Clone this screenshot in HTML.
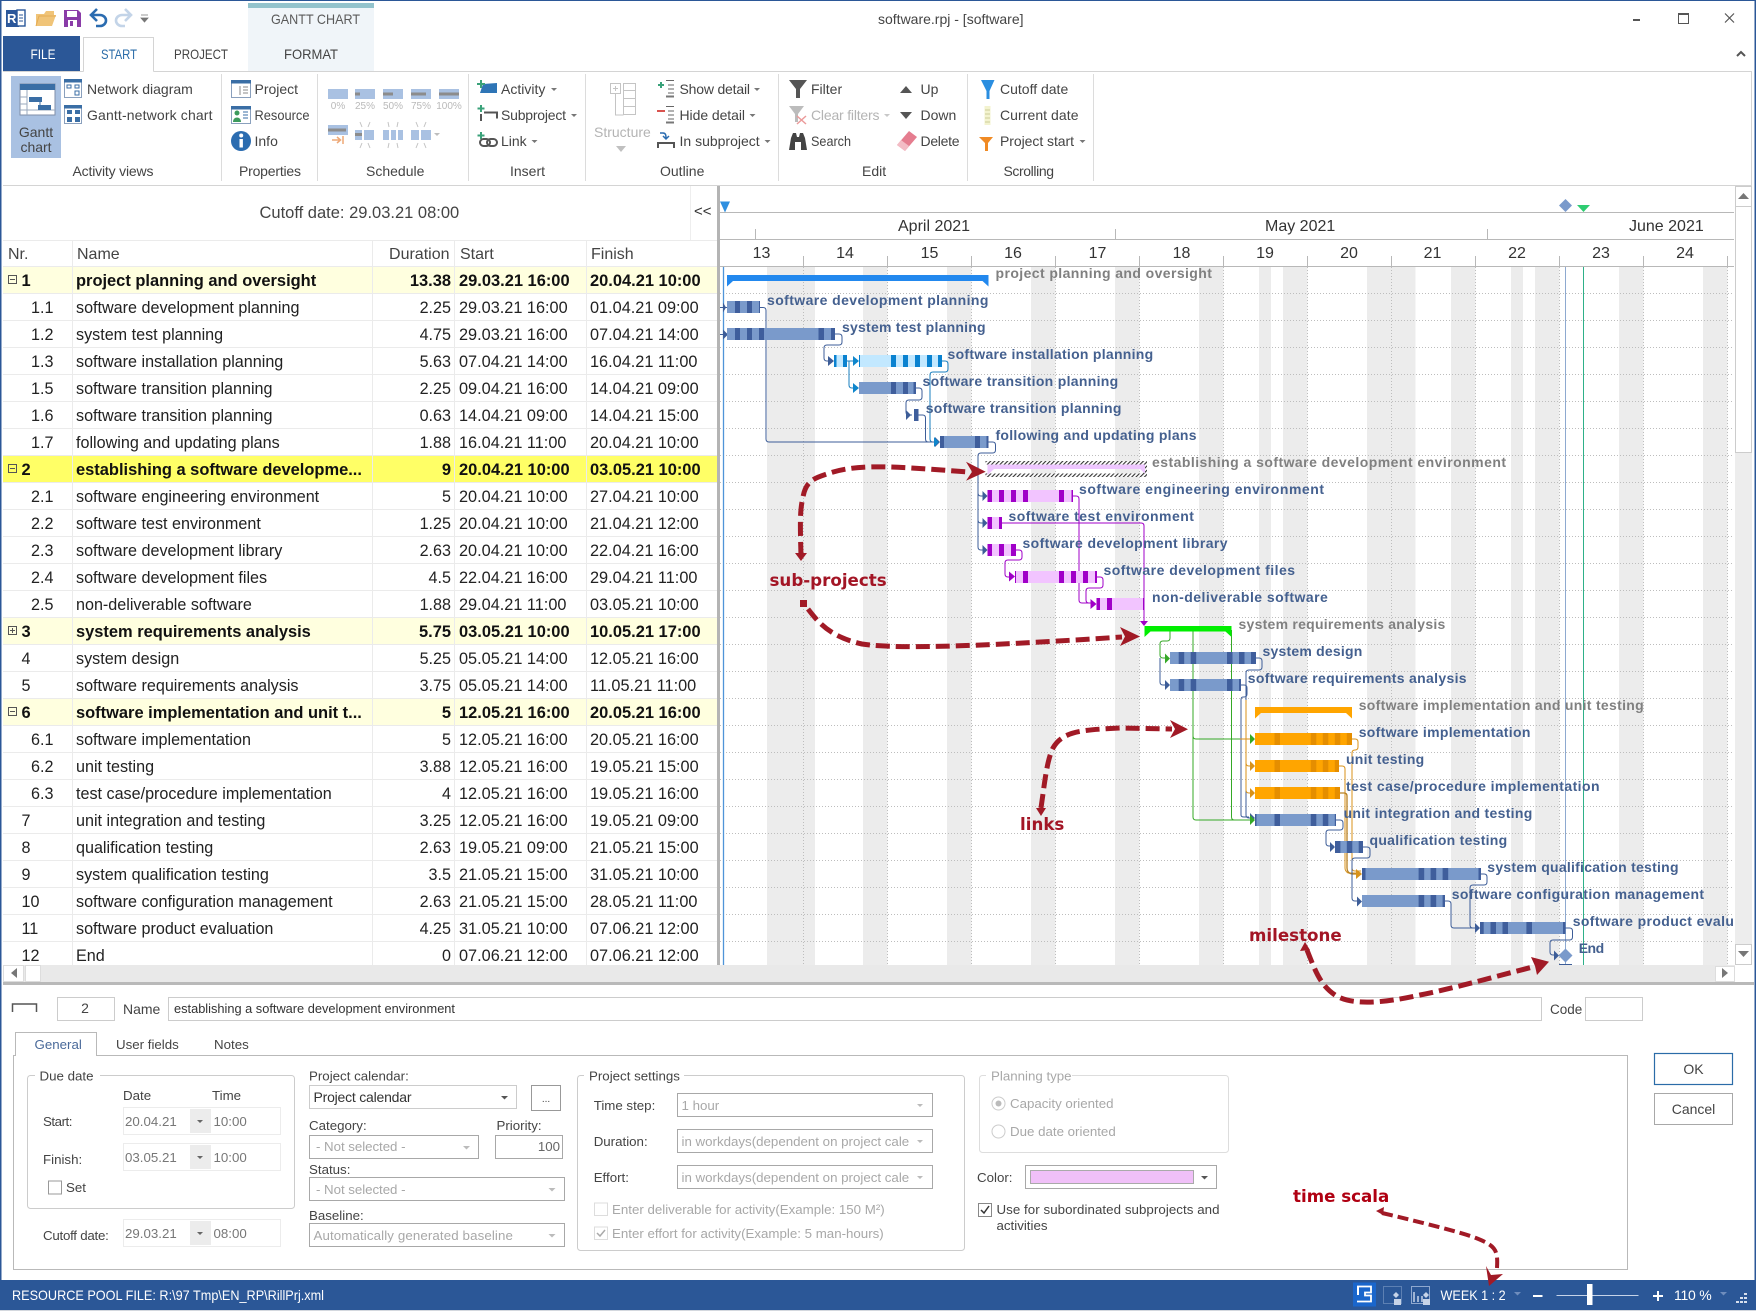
<!DOCTYPE html>
<html lang="en"><head><meta charset="utf-8"><title>software.rpj - [software]</title>
<style>
html,body{margin:0;padding:0;background:#fff;width:1756px;height:1311px;overflow:hidden}
svg{display:block}
text{font-family:"Liberation Sans",Arial,sans-serif}
.r{font-size:14px;fill:#444}
.rg{font-size:14px;fill:#b4b4b4}
.p{font-size:10px;fill:#b9b9b9}
.t{font-size:16.15px;fill:#222}
text.t[x="459"],text.t[x="590"]{font-size:16.3px}
.tb{font-size:16.45px;fill:#111;font-weight:bold}
.h{font-size:16px;fill:#444}
.e{text-anchor:end}
.m{text-anchor:middle}
.l{font-size:14px;font-weight:bold;fill:#44608f}
.s{font-size:14px;font-weight:bold;fill:#808080}
.a{font-family:"DejaVu Sans",sans-serif;font-size:16.7px;font-weight:bold;fill:#a31525}
.d{font-size:13.3px;fill:#444}
.dg{font-size:13.3px;fill:#a8a8a8}
.w{font-size:14px;fill:#fff}
.c{fill:none;stroke-width:1}
.cb{stroke:#3d5d98}.cl{stroke:#1a7fbf}.cp{stroke:#a000c8}.cg{stroke:#35a826}.co{stroke:#d8921a}
.dash{fill:none;stroke:#a11a26;stroke-width:5;stroke-dasharray:14 6}
</style></head><body>
<svg xmlns="http://www.w3.org/2000/svg" width="1756" height="1311" viewBox="0 0 1756 1311">
<defs>
<pattern id="hatch" width="3" height="3" patternUnits="userSpaceOnUse" patternTransform="rotate(45)"><rect width="3" height="3" fill="#fff"/><rect width="1.1" height="3" fill="#333"/></pattern>
<clipPath id="gc"><rect x="720" y="186" width="1014" height="779"/></clipPath>
</defs>
<rect width="1756" height="1311" fill="#fff"/>

<!-- window frame -->
<rect x="0" y="0" width="1756" height="1" fill="#2b5797"/>
<rect x="0" y="0" width="1.5" height="1311" fill="#2b5797"/>
<rect x="1754.5" y="0" width="1.5" height="1311" fill="#2b5797"/>

<!-- quick access -->
<rect x="6" y="10" width="13" height="17" fill="#2b579a"/><text x="7" y="23" style="font-size:13px;font-weight:bold;fill:#fff">R</text>
<rect x="17" y="10" width="8" height="16" fill="#fff" stroke="#2b579a" stroke-width="1.4"/><path d="M19 15h4M19 18h4M19 21h4" stroke="#2b579a"/>
<path d="M36 14h8l2-3h8v4h2l-4 11H36z" fill="#f0c478"/><path d="M36 26l3-10h17" fill="none" stroke="#e5ac55"/>
<path d="M64 10h14l3 3v14H64z" fill="#8a3ca8"/><rect x="67" y="11" width="10" height="6" fill="#fff"/><rect x="68" y="20" width="9" height="7" fill="#fff"/><rect x="70" y="21" width="3" height="5" fill="#8a3ca8"/>
<path d="M92 15h8a6 5.500 0 0 1 0 11h-4M97 9l-6 6 6 6" fill="none" stroke="#2b6cb0" stroke-width="2.6"/>
<path d="M130 15h-8a6 5.500 0 0 0 0 11h3M125 9l6 6-6 6" fill="none" stroke="#c3d4e8" stroke-width="2.6"/>
<path d="M141 15h7M141 18h7l-3.500 4z" fill="#777" stroke="#777" stroke-width=".8"/>

<!-- title bar -->
<rect x="248" y="3" width="126" height="68" fill="#f0f5f9"/><rect x="248" y="3" width="126" height="5" fill="#93c3cc"/>
<text x="271" y="24" class="r" style="fill:#5a5a5a" textLength="89" lengthAdjust="spacingAndGlyphs">GANTT CHART</text>
<text x="878" y="24" class="r" style="fill:#444">software.rpj - [software]</text>
<rect x="1633" y="19" width="7" height="2" fill="#555"/>
<rect x="1678.500" y="13.500" width="10" height="10" fill="none" stroke="#555"/><rect x="1678" y="13" width="11" height="2" fill="#555"/>
<path d="M1725 13.500l9 9M1734 13.500l-9 9" stroke="#555" stroke-width="1.2"/>
<path d="M1737 56l4-4 4 4" fill="none" stroke="#555" stroke-width="2"/>

<!-- tabs -->
<rect x="3" y="36" width="77" height="35" fill="#2b5797"/>
<text x="30.500" y="59" class="w" textLength="25" lengthAdjust="spacingAndGlyphs">FILE</text>
<path d="M83.500 71.500V37.500H153.500V71.500" fill="#fff" stroke="#d4d4d4"/>
<text x="101" y="59" class="r" style="fill:#2b6ca8" textLength="36" lengthAdjust="spacingAndGlyphs">START</text>
<text x="174" y="59" class="r" textLength="54" lengthAdjust="spacingAndGlyphs">PROJECT</text>
<text x="284" y="59" class="r" textLength="54" lengthAdjust="spacingAndGlyphs">FORMAT</text>

<!-- ribbon lines -->
<path d="M3 71.500H83.500M153.500 71.500H1751.500V185.500H3" fill="none" stroke="#d4d4d4"/>
<path d="M221.500 74V181M317.500 74V181M468.500 74V181M585.500 74V181M778.500 74V181M967.500 74V181M1093.500 74V181" stroke="#dcdcdc"/>

<!-- activity views -->
<rect x="11" y="76" width="50" height="82" fill="#a9c1e2"/>
<rect x="20" y="84" width="35" height="31" fill="#fff" stroke="#7f8ea8"/>
<rect x="20" y="84" width="35" height="6" fill="#3a6ea5"/>
<path d="M27 90v25M20 97h7M20 104h7M20 110h35" stroke="#9aa8bd"/>
<rect x="29" y="97" width="13" height="5" fill="#3a6ea5"/><rect x="38" y="105" width="13" height="5" fill="#3a6ea5"/>
<path d="M40 102v3" stroke="#3a6ea5"/>
<text x="36" y="137" class="r m">Gantt</text><text x="36" y="152" class="r m">chart</text>
<rect x="64.500" y="79.500" width="17" height="18" fill="#fff" stroke="#8aa0bd"/><rect x="64" y="79" width="18" height="3.500" fill="#3a6ea5"/>
<rect x="67" y="85" width="4" height="3" fill="none" stroke="#3a6ea5"/><rect x="75" y="85" width="4" height="3" fill="none" stroke="#3a6ea5"/><rect x="75" y="91" width="4" height="4" fill="none" stroke="#3a6ea5"/>
<rect x="64.500" y="105.500" width="17" height="18" fill="#fff" stroke="#8aa0bd"/><rect x="64" y="105" width="18" height="3.500" fill="#3a6ea5"/>
<rect x="67" y="110" width="5" height="4" fill="#3a6ea5"/><rect x="75" y="110" width="5" height="4" fill="#3a6ea5"/><rect x="67" y="117" width="5" height="5" fill="#3a6ea5"/><rect x="75" y="117" width="5" height="5" fill="#3a6ea5"/>
<text x="87" y="94" class="r">Network diagram</text>
<text x="87" y="120" class="r" textLength="125.500" lengthAdjust="spacing">Gantt-network chart</text>
<text x="72.500" y="176" class="r" textLength="81" lengthAdjust="spacing">Activity views</text>

<!-- properties -->
<rect x="231.500" y="80.500" width="19" height="17" fill="#fff" stroke="#8aa0bd"/><rect x="231" y="80" width="20" height="3.500" fill="#3a6ea5"/><path d="M240 86v9M243 87h5M243 90h5M243 93h5" stroke="#8a8a8a"/>
<rect x="231.500" y="106.500" width="19" height="17" fill="#fff" stroke="#8aa0bd"/><rect x="231" y="106" width="20" height="3.500" fill="#3a6ea5"/><circle cx="237" cy="113" r="2.500" fill="#3c9a5c"/><path d="M233 122c0-6 8-6 8 0z" fill="#3c9a5c"/><path d="M243 112h5M243 115h5M243 118h5" stroke="#3a6ea5"/>
<circle cx="241" cy="141" r="10" fill="#2b6cb0"/><rect x="239.500" y="139" width="3.400" height="8.500" fill="#fff"/><circle cx="241.200" cy="135.500" r="2" fill="#fff"/>
<text x="254.500" y="94" class="r">Project</text>
<text x="254.500" y="120" class="r" textLength="55" lengthAdjust="spacingAndGlyphs">Resource</text>
<text x="254.500" y="146" class="r">Info</text>
<text x="239" y="176" class="r" textLength="62" lengthAdjust="spacing">Properties</text>

<!-- schedule -->
<g fill="#a9c1e2"><rect x="328" y="89" width="20" height="10"/><rect x="355" y="89" width="20" height="10"/><rect x="383" y="89" width="20" height="10"/><rect x="411" y="89" width="20" height="10"/><rect x="439" y="89" width="20" height="10"/></g>
<g fill="#8c8c8c"><rect x="355" y="92.500" width="5" height="3"/><rect x="383" y="92.500" width="10" height="3"/><rect x="411" y="92.500" width="15" height="3"/><rect x="439" y="92.500" width="20" height="3"/></g>
<text x="338" y="109" class="p m">0%</text><text x="365" y="109" class="p m">25%</text><text x="393" y="109" class="p m">50%</text><text x="421" y="109" class="p m">75%</text><text x="449" y="109" class="p m">100%</text>
<rect x="328" y="125" width="20" height="10" fill="#a9c1e2"/><rect x="328" y="128.500" width="18" height="3" fill="#8c8c8c"/>
<path d="M332 140h8M337 137l3.500 3-3.500 3M343 136v8" fill="none" stroke="#eda877" stroke-width="1.500"/>
<path d="M355 130h7v10h-7zM364 130h10v10h-10z" fill="#a9c1e2"/><rect x="355" y="133" width="7" height="3" fill="#8c8c8c"/>
<path d="M383 130h6v10h-6zM391 130h5v10h-5zM398 130h5v10h-5z" fill="#a9c1e2"/>
<path d="M411 130h8v10h-8zM421 130h10v10h-10z" fill="#a9c1e2"/>
<path d="M360 122l2 5M370 122l-2 5M360 148l2-5M370 148l-2-5M388 122l1 5M398 122l-1 5M388 148l1-5M398 148l-1-5M416 122l2 5M426 122l-2 5M416 148l2-5M426 148l-2-5" stroke="#c4c4c4"/>
<path d="M434 133h6l-3 3z" fill="#bdbdbd"/>
<text x="366" y="176" class="r">Schedule</text>

<!-- insert -->
<path d="M483 84l14-1v10h-17z" fill="#2e75b6"/><path d="M481 80v8M477 84h8" stroke="#3aa27a" stroke-width="2"/>
<path d="M481 105v7M477.500 108.500h7" stroke="#3aa27a" stroke-width="2"/><path d="M481 114v7M484 112.500h13v6" fill="none" stroke="#555" stroke-width="2"/>
<path d="M481 132v7M477.500 135.500h7" stroke="#3aa27a" stroke-width="2"/><rect x="480" y="139" width="10" height="7" rx="3.500" fill="none" stroke="#555" stroke-width="2"/><rect x="487" y="139" width="10" height="7" rx="3.500" fill="none" stroke="#555" stroke-width="2"/>
<text x="501" y="94" class="r">Activity</text><path d="M551 88h6l-3 3z" fill="#777"/>
<text x="501" y="120" class="r" textLength="65" lengthAdjust="spacing">Subproject</text><path d="M571 114h6l-3 3z" fill="#777"/>
<text x="501" y="146" class="r">Link</text><path d="M531.500 140h6l-3 3z" fill="#777"/>
<text x="510" y="176" class="r">Insert</text>

<!-- outline -->
<g fill="none" stroke="#c4c4c4"><rect x="610.500" y="83.500" width="10" height="10"/><path d="M613 88.500h5M615.500 86v5M615.500 94v21h8"/><rect x="623.500" y="83.500" width="12" height="7"/><rect x="623.500" y="90.500" width="12" height="8"/><rect x="623.500" y="98.500" width="12" height="8"/><rect x="623.500" y="106.500" width="12" height="8"/></g>
<text x="594" y="137" class="rg">Structure</text><path d="M616 146h10l-5 6z" fill="#c0c0c0"/>
<path d="M658 85h6M661 82v6" stroke="#3aa27a" stroke-width="2"/><path d="M666 80.500h8M668 85h6M668 89h6M668 93h6" stroke="#666"/><path d="M666 96.500h8" stroke="#777" stroke-width="2"/>
<path d="M657 111h8" stroke="#d9534f" stroke-width="2"/><path d="M666 106.500h8M668 111h6M668 115h6M668 119h6" stroke="#666"/><path d="M666 122.500h8" stroke="#777" stroke-width="2"/>
<path d="M660 133h3c3 0 3 3 3 5M663 136l3 3 3-3" fill="none" stroke="#2b6cb0" stroke-width="1.500"/><path d="M658 148v-5h16v5" fill="none" stroke="#555" stroke-width="2"/>
<text x="679.500" y="94" class="r" textLength="70.500" lengthAdjust="spacing">Show detail</text><path d="M754 88h6l-3 3z" fill="#777"/>
<text x="679.500" y="120" class="r" textLength="65.500" lengthAdjust="spacing">Hide detail</text><path d="M749.500 114h6l-3 3z" fill="#777"/>
<text x="679.500" y="146" class="r">In subproject</text><path d="M764.500 140h6l-3 3z" fill="#777"/>
<text x="660" y="176" class="r">Outline</text>

<!-- edit -->
<path d="M789 80h18l-7 9v9h-4v-9z" fill="#555"/>
<path d="M789 106h15l-6 8v8h-3v-8z" fill="#bcbcbc"/><path d="M797 116l9 8M806 116l-9 8" stroke="#eb9a9a" stroke-width="1.500"/>
<path d="M789 150l2-12 2-5h3l1 4h2l1-4h3l2 5 2 12h-6v-8h-6v8z" fill="#444"/>
<text x="811" y="94" class="r">Filter</text>
<text x="811" y="120" class="rg" textLength="68.500" lengthAdjust="spacing">Clear filters</text><path d="M884 114h6l-3 3z" fill="#c8c8c8"/>
<text x="811" y="146" class="r" textLength="40" lengthAdjust="spacingAndGlyphs">Search</text>
<path d="M900 93l6-7 6 7z" fill="#555"/><text x="920.500" y="94" class="r">Up</text>
<path d="M900 112l6 7 6-7z" fill="#555"/><text x="920.500" y="120" class="r">Down</text>
<path d="M897 145l12-14 8 6-12 14z" fill="#e57d8f"/><path d="M897 145l4-5 8 6-4 5z" fill="#f3bcc5"/><text x="920.500" y="146" class="r" textLength="39" lengthAdjust="spacing">Delete</text>
<text x="862" y="176" class="r">Edit</text>

<!-- scrolling -->
<path d="M981 80h13.500l-5 11v8h-3v-8z" fill="#2a8ee0"/>
<path d="M984.500 106h6v19h-6z" fill="#f3f3cf"/><path d="M985 110h5M985 114h5M985 118h5M985 122h5" stroke="#cccc99"/>
<path d="M979 137h14l-5 6v8h-3v-8z" fill="#f08a24"/>
<text x="1000" y="94" class="r">Cutoff date</text>
<text x="1000" y="120" class="r" textLength="78.500" lengthAdjust="spacing">Current date</text>
<text x="1000" y="146" class="r" textLength="74" lengthAdjust="spacing">Project start</text><path d="M1079.500 140h6l-3 3z" fill="#777"/>
<text x="1003.500" y="176" class="r" textLength="50.500" lengthAdjust="spacing">Scrolling</text>

<!-- cutoff row -->
<text x="259.500" y="218" style="font-size:16.500px;fill:#444">Cutoff date: 29.03.21 08:00</text>
<path d="M690.500 186V240" stroke="#eee"/>
<text x="694" y="216" style="font-size:15px;fill:#333">&lt;&lt;</text>

<!-- table -->
<rect x="3" y="267" width="714" height="26" fill="#ffffdf"/>
<rect x="3" y="456" width="714" height="26" fill="#ffff66"/>
<rect x="3" y="618" width="714" height="26" fill="#ffffdf"/>
<rect x="3" y="699" width="714" height="26" fill="#ffffdf"/>
<g stroke="#ebebeb" fill="none">
<path d="M3 240.500H717M3 266.500H717M3 293.500H717M3 320.500H717M3 347.500H717M3 374.500H717M3 401.500H717M3 428.500H717M3 455.500H717M3 482.500H717M3 509.500H717M3 536.500H717M3 563.500H717M3 590.500H717M3 617.500H717M3 644.500H717M3 671.500H717M3 698.500H717M3 725.500H717M3 752.500H717M3 779.500H717M3 806.500H717M3 833.500H717M3 860.500H717M3 887.500H717M3 914.500H717M3 941.500H717"/>
<path d="M72.500 241V965M372.500 241V965M454.500 241V965M586.500 241V965"/>
</g>
<text x="8" y="259" class="h">Nr.</text><text x="77" y="259" class="h">Name</text><text x="449.500" y="259" class="h e">Duration</text><text x="460" y="259" class="h">Start</text><text x="591" y="259" class="h">Finish</text>

<g fill="none" stroke="#555"><rect x="8.500" y="275.500" width="8" height="8"/><path d="M10 279.500h5"/><rect x="8.500" y="464.500" width="8" height="8"/><path d="M10 468.500h5"/><rect x="8.500" y="626.500" width="8" height="8"/><path d="M10 630.500h5M12.500 628v5"/><rect x="8.500" y="707.500" width="8" height="8"/><path d="M10 711.500h5"/></g>

<text x="21.500" y="286" class="tb">1</text><text x="76" y="286" class="tb">project planning and oversight</text><text x="451" y="286" class="tb e">13.38</text><text x="459" y="286" class="tb">29.03.21 16:00</text><text x="590" y="286" class="tb">20.04.21 10:00</text>
<text x="31" y="313" class="t">1.1</text><text x="76" y="313" class="t">software development planning</text><text x="451" y="313" class="t e">2.25</text><text x="459" y="313" class="t">29.03.21 16:00</text><text x="590" y="313" class="t">01.04.21 09:00</text>
<text x="31" y="340" class="t">1.2</text><text x="76" y="340" class="t">system test planning</text><text x="451" y="340" class="t e">4.75</text><text x="459" y="340" class="t">29.03.21 16:00</text><text x="590" y="340" class="t">07.04.21 14:00</text>
<text x="31" y="367" class="t">1.3</text><text x="76" y="367" class="t">software installation planning</text><text x="451" y="367" class="t e">5.63</text><text x="459" y="367" class="t">07.04.21 14:00</text><text x="590" y="367" class="t">16.04.21 11:00</text>
<text x="31" y="394" class="t">1.5</text><text x="76" y="394" class="t">software transition planning</text><text x="451" y="394" class="t e">2.25</text><text x="459" y="394" class="t">09.04.21 16:00</text><text x="590" y="394" class="t">14.04.21 09:00</text>
<text x="31" y="421" class="t">1.6</text><text x="76" y="421" class="t">software transition planning</text><text x="451" y="421" class="t e">0.63</text><text x="459" y="421" class="t">14.04.21 09:00</text><text x="590" y="421" class="t">14.04.21 15:00</text>
<text x="31" y="448" class="t">1.7</text><text x="76" y="448" class="t">following and updating plans</text><text x="451" y="448" class="t e">1.88</text><text x="459" y="448" class="t">16.04.21 11:00</text><text x="590" y="448" class="t">20.04.21 10:00</text>
<text x="21.500" y="475" class="tb">2</text><text x="76" y="475" class="tb">establishing a software developme...</text><text x="451" y="475" class="tb e">9</text><text x="459" y="475" class="tb">20.04.21 10:00</text><text x="590" y="475" class="tb">03.05.21 10:00</text>
<text x="31" y="502" class="t">2.1</text><text x="76" y="502" class="t">software engineering environment</text><text x="451" y="502" class="t e">5</text><text x="459" y="502" class="t">20.04.21 10:00</text><text x="590" y="502" class="t">27.04.21 10:00</text>
<text x="31" y="529" class="t">2.2</text><text x="76" y="529" class="t">software test environment</text><text x="451" y="529" class="t e">1.25</text><text x="459" y="529" class="t">20.04.21 10:00</text><text x="590" y="529" class="t">21.04.21 12:00</text>
<text x="31" y="556" class="t">2.3</text><text x="76" y="556" class="t">software development library</text><text x="451" y="556" class="t e">2.63</text><text x="459" y="556" class="t">20.04.21 10:00</text><text x="590" y="556" class="t">22.04.21 16:00</text>
<text x="31" y="583" class="t">2.4</text><text x="76" y="583" class="t">software development files</text><text x="451" y="583" class="t e">4.5</text><text x="459" y="583" class="t">22.04.21 16:00</text><text x="590" y="583" class="t">29.04.21 11:00</text>
<text x="31" y="610" class="t">2.5</text><text x="76" y="610" class="t">non-deliverable software</text><text x="451" y="610" class="t e">1.88</text><text x="459" y="610" class="t">29.04.21 11:00</text><text x="590" y="610" class="t">03.05.21 10:00</text>
<text x="21.500" y="637" class="tb">3</text><text x="76" y="637" class="tb">system requirements analysis</text><text x="451" y="637" class="tb e">5.75</text><text x="459" y="637" class="tb">03.05.21 10:00</text><text x="590" y="637" class="tb">10.05.21 17:00</text>
<text x="21.500" y="664" class="t">4</text><text x="76" y="664" class="t">system design</text><text x="451" y="664" class="t e">5.25</text><text x="459" y="664" class="t">05.05.21 14:00</text><text x="590" y="664" class="t">12.05.21 16:00</text>
<text x="21.500" y="691" class="t">5</text><text x="76" y="691" class="t">software requirements analysis</text><text x="451" y="691" class="t e">3.75</text><text x="459" y="691" class="t">05.05.21 14:00</text><text x="590" y="691" class="t">11.05.21 11:00</text>
<text x="21.500" y="718" class="tb">6</text><text x="76" y="718" class="tb">software implementation and unit t...</text><text x="451" y="718" class="tb e">5</text><text x="459" y="718" class="tb">12.05.21 16:00</text><text x="590" y="718" class="tb">20.05.21 16:00</text>
<text x="31" y="745" class="t">6.1</text><text x="76" y="745" class="t">software implementation</text><text x="451" y="745" class="t e">5</text><text x="459" y="745" class="t">12.05.21 16:00</text><text x="590" y="745" class="t">20.05.21 16:00</text>
<text x="31" y="772" class="t">6.2</text><text x="76" y="772" class="t">unit testing</text><text x="451" y="772" class="t e">3.88</text><text x="459" y="772" class="t">12.05.21 16:00</text><text x="590" y="772" class="t">19.05.21 15:00</text>
<text x="31" y="799" class="t">6.3</text><text x="76" y="799" class="t">test case/procedure implementation</text><text x="451" y="799" class="t e">4</text><text x="459" y="799" class="t">12.05.21 16:00</text><text x="590" y="799" class="t">19.05.21 16:00</text>
<text x="21.500" y="826" class="t">7</text><text x="76" y="826" class="t">unit integration and testing</text><text x="451" y="826" class="t e">3.25</text><text x="459" y="826" class="t">12.05.21 16:00</text><text x="590" y="826" class="t">19.05.21 09:00</text>
<text x="21.500" y="853" class="t">8</text><text x="76" y="853" class="t">qualification testing</text><text x="451" y="853" class="t e">2.63</text><text x="459" y="853" class="t">19.05.21 09:00</text><text x="590" y="853" class="t">21.05.21 15:00</text>
<text x="21.500" y="880" class="t">9</text><text x="76" y="880" class="t">system qualification testing</text><text x="451" y="880" class="t e">3.5</text><text x="459" y="880" class="t">21.05.21 15:00</text><text x="590" y="880" class="t">31.05.21 10:00</text>
<text x="21.500" y="907" class="t">10</text><text x="76" y="907" class="t">software configuration management</text><text x="451" y="907" class="t e">2.63</text><text x="459" y="907" class="t">21.05.21 15:00</text><text x="590" y="907" class="t">28.05.21 11:00</text>
<text x="21.500" y="934" class="t">11</text><text x="76" y="934" class="t">software product evaluation</text><text x="451" y="934" class="t e">4.25</text><text x="459" y="934" class="t">31.05.21 10:00</text><text x="590" y="934" class="t">07.06.21 12:00</text>
<text x="21.500" y="961" class="t">12</text><text x="76" y="961" class="t">End</text><text x="451" y="961" class="t e">0</text><text x="459" y="961" class="t">07.06.21 12:00</text><text x="590" y="961" class="t">07.06.21 12:00</text>

<!-- gantt header -->
<path d="M720 212.500H1734M720 239.500H1734M720 266.500H1734" stroke="#b8b8b8"/>
<path d="M755.500 229V239M1115.500 229V239M1487.500 229V239" stroke="#b8b8b8"/>
<path d="M803.500 256V266M887.500 256V266M971.500 256V266M1055.500 256V266M1139.500 256V266M1223.500 256V266M1307.500 256V266M1391.500 256V266M1475.500 256V266M1559.500 256V266M1643.500 256V266M1727.500 256V266" stroke="#b8b8b8"/>
<text x="898" y="231" class="h" style="fill:#333">April 2021</text><text x="1265" y="231" class="h" style="fill:#333">May 2021</text><text x="1629" y="231" class="h" style="fill:#333">June 2021</text>
<g class="h m" style="fill:#333;font-size:16px;text-anchor:middle">
<text x="761.500" y="258">13</text><text x="845" y="258">14</text><text x="929.500" y="258">15</text><text x="1013" y="258">16</text><text x="1097.500" y="258">17</text><text x="1181.500" y="258">18</text><text x="1265" y="258">19</text><text x="1349" y="258">20</text><text x="1432.500" y="258">21</text><text x="1517" y="258">22</text><text x="1601" y="258">23</text><text x="1685" y="258">24</text>
</g>
<path d="M720 201.500h10l-5 11z" fill="#2e8fe0"/>
<path d="M1565.500 199l6.500 6.500-6.500 6.500-6.500-6.500z" fill="#7a9acb"/>
<path d="M1577 205h13l-6.500 7z" fill="#2ecc71"/>

<!-- gantt body -->
<g fill="#ececec">
<rect x="767" y="267" width="48" height="698"/><rect x="863" y="267" width="24.500" height="698"/><rect x="947" y="267" width="24.500" height="698"/><rect x="1031" y="267" width="24.500" height="698"/><rect x="1115" y="267" width="24.500" height="698"/><rect x="1199" y="267" width="24.500" height="698"/><rect x="1259" y="267" width="12" height="698"/><rect x="1283" y="267" width="24.500" height="698"/><rect x="1367" y="267" width="48.500" height="698"/><rect x="1451" y="267" width="24.500" height="698"/><rect x="1511" y="267" width="12" height="698"/><rect x="1535" y="267" width="24.500" height="698"/><rect x="1619" y="267" width="24.500" height="698"/><rect x="1703" y="267" width="24.500" height="698"/>
</g>
<g stroke="#bdbdbd" stroke-dasharray="1 2" fill="none">
<path d="M803.500 267V965M887.500 267V965M971.500 267V965M1055.500 267V965M1139.500 267V965M1223.500 267V965M1307.500 267V965M1391.500 267V965M1475.500 267V965M1559.500 267V965M1643.500 267V965M1727.500 267V965"/>
<path d="M720 293.500H1734M720 320.500H1734M720 347.500H1734M720 374.500H1734M720 401.500H1734M720 428.500H1734M720 455.500H1734M720 482.500H1734M720 509.500H1734M720 536.500H1734M720 563.500H1734M720 590.500H1734M720 617.500H1734M720 644.500H1734M720 671.500H1734M720 698.500H1734M720 725.500H1734M720 752.500H1734M720 779.500H1734M720 806.500H1734M720 833.500H1734M720 860.500H1734M720 887.500H1734M720 914.500H1734M720 941.500H1734"/>
</g>
<path d="M723.500 267V965" stroke="#4f94d8" stroke-width="1.300"/>
<path d="M1565.500 267V965" stroke="#8ea9d0"/><path d="M1583.500 267V965" stroke="#2eb089"/>

<g clip-path="url(#gc)">
<!-- connectors -->
<path class="c cb" d="M720 307.500H727M760 307.500h3q3 0 3 3V439q0 3 3 3H938"/>
<path class="c cb" d="M720 334.500H727M835 334h4q3 0 3 3v5q0 3-3 3H827q-3 0-3 3v10q0 3 3 3h6"/>
<path class="c cl" d="M847 361H858M849 361V385q0 3 3 3h6"/>
<path class="c cl" d="M942 361h3q3 0 3 3v5q0 3-3 3H933q-3 0-3 3V439q0 3 3 3h6"/>
<path class="c cb" d="M916 388h3q3 0 3 3v6q0 3-3 3H909q-3 0-3 3v9q0 3 3 3h3"/>
<path class="c cb" d="M918.500 415h4q3 0 3 3V439q0 3 3 3h8"/>
<path class="c cb" d="M988.500 442h4q3 0 3 3v5q0 3-3 3H981q-3 0-3 3V547q0 3 3 3h5M978 493q0 3 3 3h5M978 520q0 3 3 3h5"/>
<path class="c cp" d="M1073 496h3q3 0 3 3V600q0 3 3 3h13"/>
<path class="c cp" d="M1002 523H1141q3 0 3 3V624"/>
<path class="c cp" d="M1016 550h3q3 0 3 3v4q0 3-3 3h-11q-3 0-3 3v11q0 3 3 3h6"/>
<path class="c cp" d="M1097 577h3q3 0 3 3v5q0 3-3 3h-11q-3 0-3 3v9q0 3 3 3h6"/>
<path class="c cg" d="M1170 630v8q0 3-3 3h-4q-3 0-3 3v11q0 3 3 3h6"/>
<path class="c cb" d="M1160 658V682q0 3 3 3h6"/>
<path class="c cg" d="M1193 630V736q0 3 3 3H1254M1193 736V817q0 3 3 3H1254M1231.500 630V817q0 3 3 3H1240"/>
<path class="c cb" d="M1256 658h3q3 0 3 3v6q0 3-3 3h-10q-3 0-3 3V815q0 3 3 3h5"/>
<path class="c cb" d="M1241 685h3q3 0 3 3v6q0 3-3 3h-1q-2 0-2 3V815q0 2 3 2h5"/>
<path class="c co" d="M1246 700V763q0 3 3 3h5M1246 763V790q0 3 3 3h5M1240 739h14"/>
<path class="c co" d="M1352 739h3q3 0 3 3v5q0 3-3 3q-3 0-3 3V868q0 3 3 3h6"/>
<path class="c co" d="M1339 766h3q3 0 3 3V868q0 3 3 5h13"/>
<path class="c co" style="stroke:#b88020;stroke-width:1.300" d="M1340 793h4q3 0 3 3V868q0 5 5 6h9"/>
<path class="c cb" d="M1336 820h4q3 0 3 3v4q0 3-3 3h-11q-3 0-3 3v10q0 3 3 3h5"/>
<path class="c cb" d="M1363 847h4q3 0 3 3v5q0 3-3 3H1355q-3 0-3 3V898q0 3 3 3h6"/>
<path class="c cb" d="M1481 874h3q3 0 3 3v5q0 3-3 3h-11q-3 0-3 3V925q0 3 3 3h6"/>
<path class="c cb" d="M1445 901h3q3 0 3 3V925q0 3 3 3H1479"/>
<path class="c cb" d="M1565.500 928h4q3 0 3 3v6q0 3-3 3H1553q-3 0-3 3V952q0 3 3 3h5M1559 964.500H1572"/>

<!-- arrow heads -->
<path fill="#3d5d98" d="M723 329.500l5 5-5 5zM828 356l6 5-6 5zM935 437l5 5-5 5zM906 410l5 5-5 5zM982.500 491l5 5-5 5zM982.500 518l5 5-5 5zM982.500 545l5 5-5 5zM1165 680l5 5-5 5zM1330 842l5 5-5 5zM1357 896.500l5 5-5 5zM1475 923l5 5-5 5zM1554 950.500l5 5-5 5zM1250 813l5 5-5 5zM723 302.500l3 5-3 5z"/>
<path fill="#0f86cc" d="M853 356l6 5-6 5zM853 383l6 5-6 5zM934 437l5 5-5 5z"/>
<path fill="#a000c8" d="M1009 571.500l6 5-6 5zM1090.500 599l6 5-6 5zM1140 621h8l-4 5z"/>
<path fill="#35a826" d="M1165 653.500l5 5-5 5zM1250 734l5 5-5 5zM1250 815l5 5-5 5z"/>
<path fill="#d8921a" d="M1250 761l5 5-5 5zM1250 788l5 5-5 5zM1356 869l6 5-6 5z"/>

<!-- summary bars -->
<path fill="#2288ee" d="M727 275h261.500v11.500l-6-5.500H733l-6 5.500z"/>
<path fill="url(#hatch)" d="M985.500 461h161.500v3.500H985.500zM985.500 473.500h161.500v3.500H985.500zM1143 464h4v10h-4z"/>
<path fill="#eec6ff" d="M987.500 464.500H1145v9l-5-4.500H994l-6.500 6z"/>
<path fill="#00ee00" d="M1144.500 626h87v11l-6-5.500h-75l-6 5.500z"/>
<path fill="#ffa500" d="M1255 707h97v11.500l-6-5.500h-85l-6 5.500z"/>

<!-- row bars -->
<g fill="#7a9acb">
<rect x="727" y="301" width="33" height="12"/><rect x="727" y="328" width="108" height="12"/>
<rect x="859" y="382" width="57" height="12"/><rect x="940" y="436" width="48.500" height="12"/>
<rect x="1170" y="652" width="86" height="12"/><rect x="1170" y="679" width="71" height="12"/>
<rect x="1255" y="814" width="81" height="12"/><rect x="1335" y="841" width="28" height="12"/>
<rect x="1362" y="868" width="119" height="12"/><rect x="1362" y="895" width="83" height="12"/><rect x="1480" y="922" width="85.500" height="12"/>
</g>
<g fill="#3f5e9c">
<rect x="735" y="301" width="5" height="12"/><rect x="747" y="301" width="5" height="12"/><rect x="759" y="301" width="1" height="12"/>
<rect x="735" y="328" width="5" height="12"/><rect x="747" y="328" width="5" height="12"/><rect x="759" y="328" width="5" height="12"/><rect x="818.500" y="328" width="5.500" height="12"/><rect x="831" y="328" width="4" height="12"/>
<rect x="891" y="382" width="5" height="12"/><rect x="903" y="382" width="5" height="12"/><rect x="913.500" y="382" width="2.500" height="12"/>
<rect x="914" y="409" width="4.500" height="12"/>
<rect x="940" y="436" width="4" height="12"/><rect x="975" y="436" width="5" height="12"/><rect x="986.500" y="436" width="2" height="12"/>
<rect x="1178.700" y="652" width="5.500" height="12"/><rect x="1190.700" y="652" width="5.500" height="12"/><rect x="1227" y="652" width="5.500" height="12"/><rect x="1239" y="652" width="5.500" height="12"/><rect x="1251" y="652" width="5" height="12"/>
<rect x="1178.700" y="679" width="5.500" height="12"/><rect x="1190.700" y="679" width="5.500" height="12"/><rect x="1227" y="679" width="5.500" height="12"/><rect x="1239" y="679" width="2" height="12"/>
<rect x="1255" y="814" width="1.500" height="12"/><rect x="1274.500" y="814" width="5.500" height="12"/><rect x="1310.800" y="814" width="5.500" height="12"/><rect x="1322.800" y="814" width="5.500" height="12"/><rect x="1334.800" y="814" width="1.200" height="12"/>
<rect x="1335" y="841" width="5.400" height="12"/><rect x="1346.800" y="841" width="5.500" height="12"/><rect x="1358.700" y="841" width="4.300" height="12"/>
<rect x="1362" y="868" width="3.500" height="12"/><rect x="1418.600" y="868" width="5.600" height="12"/><rect x="1430.600" y="868" width="5.600" height="12"/><rect x="1442.600" y="868" width="5.600" height="12"/><rect x="1478.500" y="868" width="2.500" height="12"/>
<rect x="1418.600" y="895" width="5.600" height="12"/><rect x="1430.600" y="895" width="5.600" height="12"/><rect x="1442.600" y="895" width="2.400" height="12"/>
<rect x="1480" y="922" width="3.700" height="12"/><rect x="1490.500" y="922" width="5.500" height="12"/><rect x="1502.500" y="922" width="5.500" height="12"/><rect x="1526.400" y="922" width="5.600" height="12"/><rect x="1563" y="922" width="2.500" height="12"/>
</g>
<g fill="#c2e8ff"><rect x="834" y="355" width="13" height="12"/><rect x="859" y="355" width="83" height="12"/></g>
<g fill="#0a82d0"><rect x="834" y="355" width="2.500" height="12"/><rect x="843" y="355" width="4" height="12"/><rect x="859" y="355" width="1" height="12"/><rect x="891" y="355" width="5" height="12"/><rect x="903" y="355" width="5" height="12"/><rect x="915" y="355" width="5" height="12"/><rect x="927" y="355" width="5" height="12"/><rect x="938" y="355" width="4" height="12"/></g>
<g fill="#f2c4ff"><rect x="987.500" y="490" width="85.500" height="12"/><rect x="987.500" y="517" width="14.500" height="12"/><rect x="987.500" y="544" width="28.500" height="12"/><rect x="1015" y="571" width="82" height="12"/><rect x="1096.500" y="598" width="48" height="12"/></g>
<g fill="#a000c8"><rect x="987.500" y="490" width="4.500" height="12"/><rect x="999" y="490" width="5" height="12"/><rect x="1011" y="490" width="5" height="12"/><rect x="1023" y="490" width="5" height="12"/><rect x="1059" y="490" width="5" height="12"/><rect x="1071.500" y="490" width="1.500" height="12"/>
<rect x="987.500" y="517" width="4.500" height="12"/><rect x="999" y="517" width="3" height="12"/>
<rect x="987.500" y="544" width="4.500" height="12"/><rect x="999" y="544" width="5" height="12"/><rect x="1011" y="544" width="5" height="12"/>
<rect x="1015" y="571" width="1" height="12"/><rect x="1023" y="571" width="5" height="12"/><rect x="1059" y="571" width="5" height="12"/><rect x="1071" y="571" width="5" height="12"/><rect x="1083" y="571" width="5" height="12"/><rect x="1095" y="571" width="2" height="12"/>
<rect x="1096.500" y="598" width="3.500" height="12"/><rect x="1107" y="598" width="5" height="12"/><rect x="1143" y="598" width="1.500" height="12"/></g>
<g fill="#ffa500"><rect x="1255" y="733" width="97" height="12"/><rect x="1255" y="760" width="84" height="12"/><rect x="1255" y="787" width="85" height="12"/></g>
<g fill="#e58e00"><rect x="1274.500" y="733" width="5.500" height="12"/><rect x="1310.800" y="733" width="5.500" height="12"/><rect x="1322.800" y="733" width="5.500" height="12"/><rect x="1334.800" y="733" width="5.500" height="12"/><rect x="1346.800" y="733" width="5.200" height="12"/>
<rect x="1274.500" y="760" width="5.500" height="12"/><rect x="1310.800" y="760" width="5.500" height="12"/><rect x="1322.800" y="760" width="5.500" height="12"/><rect x="1334.800" y="760" width="4.200" height="12"/>
<rect x="1274.500" y="787" width="5.500" height="12"/><rect x="1310.800" y="787" width="5.500" height="12"/><rect x="1322.800" y="787" width="5.500" height="12"/><rect x="1334.800" y="787" width="5.200" height="12"/></g>
<path d="M1565.500 948.500l7 7-7 7-7-7z" fill="#7a9acb"/>

<!-- gantt labels -->
<text x="995.500" y="278" class="s" textLength="216.400">project planning and oversight</text>
<text x="767" y="305" class="l" textLength="221.400">software development planning</text>
<text x="842" y="332" class="l" textLength="143.600">system test planning</text>
<text x="947.500" y="359" class="l" textLength="205.700">software installation planning</text>
<text x="922.500" y="386" class="l" textLength="195.700">software transition planning</text>
<text x="925.700" y="413" class="l" textLength="195.700">software transition planning</text>
<text x="995.500" y="440" class="l" textLength="201">following and updating plans</text>
<text x="1152" y="467" class="s" textLength="354">establishing a software development environment</text>
<text x="1079" y="494" class="l" textLength="245">software engineering environment</text>
<text x="1008.500" y="521" class="l" textLength="185.400">software test environment</text>
<text x="1022.500" y="548" class="l" textLength="205">software development library</text>
<text x="1103.500" y="575" class="l" textLength="191.500">software development files</text>
<text x="1152" y="602" class="l" textLength="175.800">non-deliverable software</text>
<text x="1238.500" y="629" class="s" textLength="206.800">system requirements analysis</text>
<text x="1262.500" y="656" class="l" textLength="99.800">system design</text>
<text x="1247.800" y="683" class="l" textLength="218.800">software requirements analysis</text>
<text x="1358.700" y="710" class="s" textLength="285">software implementation and unit testing</text>
<text x="1358.700" y="737" class="l" textLength="171.700">software implementation</text>
<text x="1346" y="764" class="l" textLength="78.200">unit testing</text>
<text x="1346" y="791" class="l" textLength="253.500">test case/procedure implementation</text>
<text x="1343.500" y="818" class="l" textLength="188.800">unit integration and testing</text>
<text x="1369.500" y="845" class="l" textLength="137.700">qualification testing</text>
<text x="1487.300" y="872" class="l" textLength="191.200">system qualification testing</text>
<text x="1451.800" y="899" class="l" textLength="252.300">software configuration management</text>
<text x="1572.700" y="926" class="l" style="letter-spacing:.38px">software product evaluation</text>
<text x="1578.700" y="953" class="l" textLength="25.500">End</text>
</g>

<!-- splitter -->
<rect x="717" y="186" width="3" height="779" fill="#b4b4b4"/>

<!-- vertical scrollbar -->
<rect x="1735" y="186" width="17" height="779" fill="#ededed"/>
<rect x="1735.500" y="206.500" width="16" height="246" fill="#fff" stroke="#ccc"/>
<rect x="1735.500" y="186.500" width="16" height="20" fill="#fff" stroke="#ccc"/>
<path d="M1738 199l5.500-6 5.500 6z" fill="#777"/>
<rect x="1735.500" y="944.500" width="16" height="20" fill="#fff" stroke="#ccc"/>
<path d="M1738 951l5.500 6 5.500-6z" fill="#777"/>

<!-- horizontal scrollbar -->
<rect x="3" y="965" width="1732" height="17" fill="#e9e9e9"/>
<rect x="3.500" y="965.500" width="20" height="16" fill="#fff" stroke="#ddd"/><path d="M17 968v10l-6-5z" fill="#777"/>
<rect x="25.500" y="965.500" width="15" height="16" fill="#fff" stroke="#ddd"/>
<rect x="1715.500" y="966.500" width="19" height="15" fill="#fff" stroke="#ddd"/><path d="M1722 968v10l6-5z" fill="#777"/>
<rect x="3" y="982" width="1751" height="3" fill="#b9b9b9"/>

<!-- dialog top -->
<path d="M12.500 1012V1004H36.500V1012" fill="none" stroke="#555" stroke-width="1.500"/>
<rect x="57.500" y="997.500" width="57" height="23" fill="#fff" stroke="#ccc"/>
<text x="85" y="1013" class="d m" style="font-size:14px">2</text>
<text x="123" y="1014" class="r">Name</text>
<rect x="168.500" y="997.500" width="1373" height="23" fill="#fff" stroke="#ccc"/>
<text x="174" y="1013" style="font-size:12.800px;fill:#333">establishing a software development environment</text>
<text x="1550" y="1014" class="r" style="font-size:13.500px">Code</text>
<rect x="1585.500" y="997.500" width="57" height="23" fill="#fff" stroke="#ccc"/>

<!-- dialog tabs -->
<path d="M13.500 1269.500V1055.500H15.500V1032.500H96.500V1055.500H1627.500V1269.500z" fill="#fff" stroke="#b9b9b9"/>
<path d="M16 1055.500H96" stroke="#fff" stroke-width="1.500"/>
<text x="34.500" y="1049" class="d" style="fill:#4a6a9a">General</text>
<text x="116" y="1049" class="d">User fields</text>
<text x="214" y="1049" class="d">Notes</text>

<!-- due date -->
<rect x="27.500" y="1075.500" width="267" height="133" rx="3" fill="none" stroke="#ccc"/>
<rect x="35" y="1070" width="65" height="12" fill="#fff"/>
<text x="39.500" y="1080.500" class="d">Due date</text>
<text x="123" y="1100" class="d">Date</text><text x="212" y="1100" class="d">Time</text>
<text x="43" y="1126" class="d" textLength="29.500" lengthAdjust="spacing">Start:</text>
<text x="43" y="1164" class="d">Finish:</text>
<text x="43" y="1240" class="d" textLength="65.800" lengthAdjust="spacing">Cutoff date:</text>
<g fill="#fff" stroke="#ececec"><rect x="123.500" y="1107.500" width="157" height="27"/><rect x="123.500" y="1143.500" width="157" height="27"/><rect x="123.500" y="1219.500" width="157" height="27"/></g>
<g fill="#ececec"><rect x="190" y="1109" width="21" height="24"/><rect x="190" y="1145" width="21" height="24"/><rect x="190" y="1221" width="21" height="24"/></g>
<path fill="#666" d="M197 1120h6l-3 3zM197 1156h6l-3 3zM197 1232h6l-3 3z"/>
<g><text x="125" y="1126" style="fill:#777;font-size:13.300px">20.04.21</text><text x="213.500" y="1126" style="fill:#777;font-size:13.300px">10:00</text><text x="125" y="1162" style="fill:#777;font-size:13.300px">03.05.21</text><text x="213.500" y="1162" style="fill:#777;font-size:13.300px">10:00</text><text x="125" y="1238" style="fill:#777;font-size:13.300px">29.03.21</text><text x="213.500" y="1238" style="fill:#777;font-size:13.300px">08:00</text></g>
<rect x="48.500" y="1181" width="13" height="13" fill="#fff" stroke="#999"/><text x="66" y="1192" class="d">Set</text>

<!-- middle col -->
<text x="309" y="1080.500" class="d">Project calendar:</text>
<rect x="309.500" y="1085.500" width="207" height="23" fill="#fff" stroke="#ccc"/>
<text x="313.500" y="1102" class="d" style="font-size:14px;fill:#333" textLength="98" lengthAdjust="spacing">Project calendar</text><path d="M501 1096h7l-3.500 3.500z" fill="#555"/>
<rect x="531.500" y="1085.500" width="29" height="25" fill="#fff" stroke="#999"/><text x="546" y="1102" class="d m" style="font-size:10px">...</text>
<text x="309" y="1130" class="d">Category:</text>
<rect x="309.500" y="1135.500" width="169" height="23" fill="#fff" stroke="#a8a8a8"/>
<text x="316" y="1151" class="dg" textLength="89.500" lengthAdjust="spacing">- Not selected -</text><path d="M463 1146h7l-3.500 3.500z" fill="#bbb"/>
<text x="496.500" y="1130" class="d">Priority:</text>
<rect x="495.500" y="1135.500" width="67" height="23" fill="#fff" stroke="#a8a8a8"/><text x="560" y="1151" class="d e" style="fill:#666">100</text>
<text x="309" y="1174" class="d">Status:</text>
<rect x="309.500" y="1177.500" width="255" height="23" fill="#fff" stroke="#a8a8a8"/>
<text x="316" y="1194" class="dg" textLength="89.500" lengthAdjust="spacing">- Not selected -</text><path d="M548.500 1188h7l-3.500 3.500z" fill="#bbb"/>
<text x="309" y="1220" class="d">Baseline:</text>
<rect x="309.500" y="1223.500" width="255" height="23" fill="#fff" stroke="#a8a8a8"/>
<text x="313.500" y="1240" class="dg" textLength="199.400" lengthAdjust="spacing">Automatically generated baseline</text><path d="M548.500 1234h7l-3.500 3.500z" fill="#bbb"/>

<!-- project settings -->
<rect x="577.500" y="1075.500" width="387" height="175" rx="3" fill="none" stroke="#ccc"/>
<rect x="584" y="1070" width="100" height="12" fill="#fff"/>
<text x="589" y="1080.500" class="d">Project settings</text>
<text x="593.700" y="1110" class="d">Time step:</text>
<text x="593.700" y="1146" class="d">Duration:</text>
<text x="593.700" y="1182" class="d">Effort:</text>
<rect x="677.500" y="1093.500" width="255" height="23" fill="#fff" stroke="#a8a8a8"/>
<rect x="677.500" y="1129.500" width="255" height="23" fill="#fff" stroke="#a8a8a8"/>
<rect x="677.500" y="1165.500" width="255" height="23" fill="#fff" stroke="#a8a8a8"/>
<text x="681.500" y="1110" class="dg">1 hour</text>
<text x="681.500" y="1146" class="dg">in workdays(dependent on project cale</text>
<text x="681.500" y="1182" class="dg">in workdays(dependent on project cale</text>
<path d="M917 1104h6l-3 3zM917 1140h6l-3 3zM917 1176h6l-3 3z" fill="#bbb"/>
<rect x="594.500" y="1203" width="13" height="12.500" fill="#fff" stroke="#ddd"/>
<text x="612" y="1214" class="dg">Enter deliverable for activity(Example: 150 M²)</text>
<rect x="594.500" y="1227" width="13" height="12.500" fill="#fff" stroke="#ddd"/><path d="M597 1233l3 3 5-6" fill="none" stroke="#aaa" stroke-width="1.500"/>
<text x="612" y="1238" class="dg">Enter effort for activity(Example: 5 man-hours)</text>

<!-- planning type -->
<rect x="979.500" y="1075.500" width="249" height="77" rx="3" fill="none" stroke="#ddd"/>
<rect x="986" y="1070" width="86" height="12" fill="#fff"/>
<text x="991" y="1080.500" class="dg">Planning type</text>
<circle cx="998.500" cy="1103.500" r="6.500" fill="#fff" stroke="#ccc"/><circle cx="998.500" cy="1103.500" r="3" fill="#bbb"/>
<text x="1010" y="1108" class="dg">Capacity oriented</text>
<circle cx="998.500" cy="1131.500" r="6.500" fill="#fff" stroke="#ccc"/>
<text x="1010" y="1136" class="dg">Due date oriented</text>
<text x="977" y="1182" class="d">Color:</text>
<rect x="1025.500" y="1165.500" width="191" height="23" fill="#fff" stroke="#a8a8a8"/>
<rect x="1030.500" y="1170.500" width="163" height="13" fill="#f0c0f8" stroke="#aaa"/>
<path d="M1201 1176h7l-3.500 3.500z" fill="#555"/>
<rect x="978.500" y="1203.500" width="13" height="13" fill="#fff" stroke="#888"/><path d="M981 1210l3 3 5-7" fill="none" stroke="#333" stroke-width="1.500"/>
<text x="996.500" y="1214" class="d" textLength="223" lengthAdjust="spacing">Use for subordinated subprojects and</text>
<text x="996.500" y="1230" class="d">activities</text>

<!-- buttons -->
<rect x="1654.500" y="1053.500" width="78" height="31" fill="#fff" stroke="#2b6ca8" stroke-width="1.200"/>
<text x="1693.500" y="1074" class="r m">OK</text>
<rect x="1654.500" y="1093.500" width="78" height="31" fill="#fff" stroke="#a8a8a8"/>
<text x="1693.500" y="1114" class="r m">Cancel</text>

<!-- status bar -->
<rect x="0" y="1280" width="1756" height="30" fill="#2b5797"/>
<rect x="0" y="1310" width="1756" height="1" fill="#d4d8de"/>
<text x="12" y="1300" class="w" textLength="312" lengthAdjust="spacingAndGlyphs">RESOURCE POOL FILE: R:\97 Tmp\EN_RP\RillPrj.xml</text>
<rect x="1353" y="1282.500" width="23" height="24" fill="#1a66cc"/>
<path d="M1357 1286.500h14v6h-6v3h6v6h-14" fill="none" stroke="#fff" stroke-width="1.800"/><rect x="1357" y="1286" width="2" height="9" fill="#fff"/>
<rect x="1383.500" y="1286.500" width="18" height="17" fill="none" stroke="#8fa8cf" stroke-dasharray="1 1"/><path d="M1396 1292l3 3-3 3-3-3z" fill="#c6d3e8"/><rect x="1394" y="1299" width="7" height="6" fill="#c6d3e8"/>
<rect x="1411.500" y="1286.500" width="18" height="17" fill="none" stroke="#8fa8cf"/><path d="M1414 1292v10M1418 1296v6M1422 1296v6" stroke="#c6d3e8" stroke-width="1.500"/><path d="M1426 1292l3 3-3 3-3-3z" fill="#c6d3e8"/><rect x="1423" y="1299" width="7" height="6" fill="#c6d3e8"/>
<text x="1440.500" y="1300" class="w" textLength="65.200" lengthAdjust="spacingAndGlyphs">WEEK 1 : 2</text><path d="M1514 1292h7l-3.500 3.500z" fill="#6f8dbd"/>
<rect x="1533" y="1295" width="9.500" height="2" fill="#fff"/>
<rect x="1556.500" y="1295" width="82" height="1" fill="#c6d3e8"/>
<rect x="1587" y="1284" width="5.500" height="21" fill="#fff"/>
<path d="M1653 1296h10M1658 1291v10" stroke="#fff" stroke-width="2"/>
<text x="1674" y="1300" class="w" textLength="37.700" lengthAdjust="spacing">110 %</text><path d="M1720 1292h7l-3.500 3.500z" fill="#6f8dbd"/>
<g fill="#d8e0ee"><rect x="1744" y="1293" width="3" height="2"/><rect x="1740" y="1297" width="3" height="2"/><rect x="1744" y="1297" width="3" height="2"/><rect x="1736" y="1301" width="3" height="2"/><rect x="1740" y="1301" width="3" height="2"/><rect x="1744" y="1301" width="3" height="2"/></g>

<!-- annotations (top layer) -->
<text x="769.500" y="586" class="a">sub-projects</text>
<text x="1020" y="830" class="a">links</text>
<text x="1249" y="941" class="a">milestone</text>
<text x="1293" y="1202" class="a" style="fill:#b00012">time scala</text>

<path class="dash" d="M801 556C800 520 800 510 803 497C806 480 815 478 830 473C860 463 900 467 968 472"/>
<path fill="#a11a26" d="M985.700 471.700L966 461.700 972 471.700 966 480.700z"/><path fill="#a11a26" d="M801 561l-6-8h12z"/>
<path class="dash" d="M808 609C818 622 830 637 862 644C900 650 1000 645 1122 637"/>
<path fill="#a11a26" d="M1140 636.500L1120 627 1125 636.500 1120 646z"/><rect x="800" y="600" width="7" height="7" fill="#a11a26"/>
<path class="dash" d="M1041 808C1045 780 1047 760 1053 748C1063 730 1085 730 1120 728L1172 729"/>
<path fill="#a11a26" d="M1188 729.300L1170 720 1175 729 1170 738z"/><path fill="#a11a26" d="M1041 816l-5-8h10z"/>
<path class="dash" d="M1307 950C1315 970 1320 985 1335 995C1350 1005 1380 1004 1420 995C1460 987 1500 975 1533 967"/>
<path fill="#a11a26" d="M1549 961.700L1531 957 1535 966 1537 975z"/><path fill="#a11a26" d="M1305 942l-5 9 10-1z"/>
<path class="dash" style="stroke-width:4;stroke-dasharray:11 5" d="M1382 1213C1420 1222 1460 1232 1476 1238C1496 1246 1498 1250 1497 1268"/>
<path fill="#a11a26" d="M1489 1286L1486 1266 1491 1275 1503 1274z"/><path fill="#a11a26" d="M1376 1211l8-4-1 8z"/>
</svg>
</body></html>
